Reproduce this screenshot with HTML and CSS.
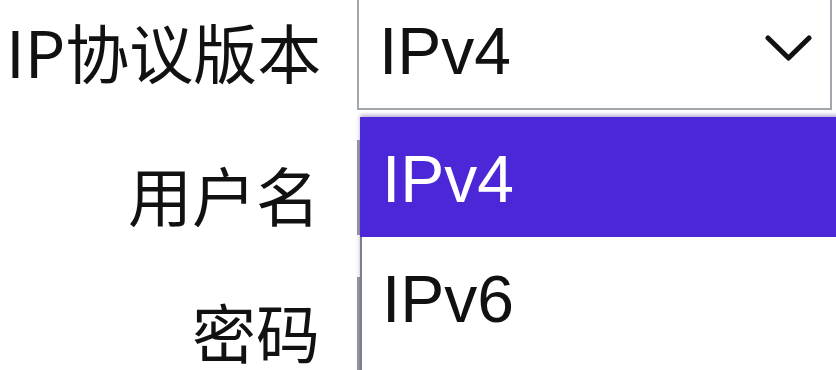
FILE: index.html
```html
<!DOCTYPE html>
<html lang="zh-CN">
<head>
  <meta charset="UTF-8">
  <meta name="viewport" content="width=device-width, initial-scale=1.0">
  <title>连接设置</title>
  <link rel="stylesheet" href="styles.css">
</head>
<body>
  <form class="conn-form">
    <!-- IP version (dropdown open) -->
    <div class="form-row row-select">
      <label class="field-label label-left">IP协议版本</label>
      <div class="select-wrap">
        <div class="select-box">
          <span class="select-value">IPv4</span>
          <svg class="chevron" width="47" height="28" viewBox="0 0 47 28">
            <polyline points="3,4 23.5,24 44,4" fill="none" stroke="#111" stroke-width="5" stroke-linecap="round" stroke-linejoin="round"/>
          </svg>
        </div>
        <ul class="select-list">
          <li class="option selected">IPv4</li>
          <li class="option">IPv6</li>
        </ul>
      </div>
    </div>

    <div class="form-row">
      <label class="field-label">用户名</label>
      <input class="text-input" type="text">
    </div>

    <div class="form-row">
      <label class="field-label">密码</label>
      <input class="text-input" type="password">
    </div>
  </form>
</body>
</html>
```

FILE: styles.css
```css
/* Base */
* {
  box-sizing: border-box;
  margin: 0;
  padding: 0;
}

body {
  background: #fff;
  color: #111;
  font-family: 'Noto Sans CJK SC', 'Noto Sans', sans-serif;
  overflow: hidden;
}

/* Form layout */
.conn-form {
  display: flex;
  flex-direction: column;
  gap: 42px;
  margin-top: -10px;
  padding-right: 4px;
}

.form-row {
  display: grid;
  grid-template-columns: 320px 1fr;
  column-gap: 37px;
  align-items: center;
}

.row-select {
  margin-bottom: -12px;
  position: relative;
  z-index: 5;
}

.field-label {
  font-size: 64px;
  line-height: 1;
  text-align: right;
  white-space: nowrap;
  padding-top: 10px;
}

.field-label.label-left {
  text-align: left;
  padding: 0 0 0 6px;
}

/* Select */
.select-wrap {
  position: relative;
}

.select-box {
  height: 120px;
  border: 2px solid #a2a6ad;
  background: #fff;
  display: flex;
  align-items: center;
  justify-content: space-between;
  padding: 2px 18px 0 20px;
}

.select-value,
.option {
  font-family: 'Liberation Sans', Arial, sans-serif;
  font-size: 66px;
}

.chevron {
  margin-top: -6px;
}

/* Open dropdown list */
.select-list {
  list-style: none;
  position: absolute;
  top: calc(100% + 7px);
  left: 3px;
  right: -20px;
  height: 300px;
  background: #fff;
  border-left: 2px solid #7b7f87;
  box-shadow: 0 -2px 4px rgba(40, 20, 120, 0.35);
}

.option {
  height: 120px;
  display: flex;
  align-items: center;
  padding: 4px 0 0 20px;
  color: #111;
}

.option.selected {
  background: #4b27d7;
  color: #fff;
  margin-left: -2px;
  padding-left: 22px;
}

/* Text inputs (behind the list) */
.text-input {
  height: 95px;
  border: 3px solid #9a9ea6;
  background: #fff;
}
```
